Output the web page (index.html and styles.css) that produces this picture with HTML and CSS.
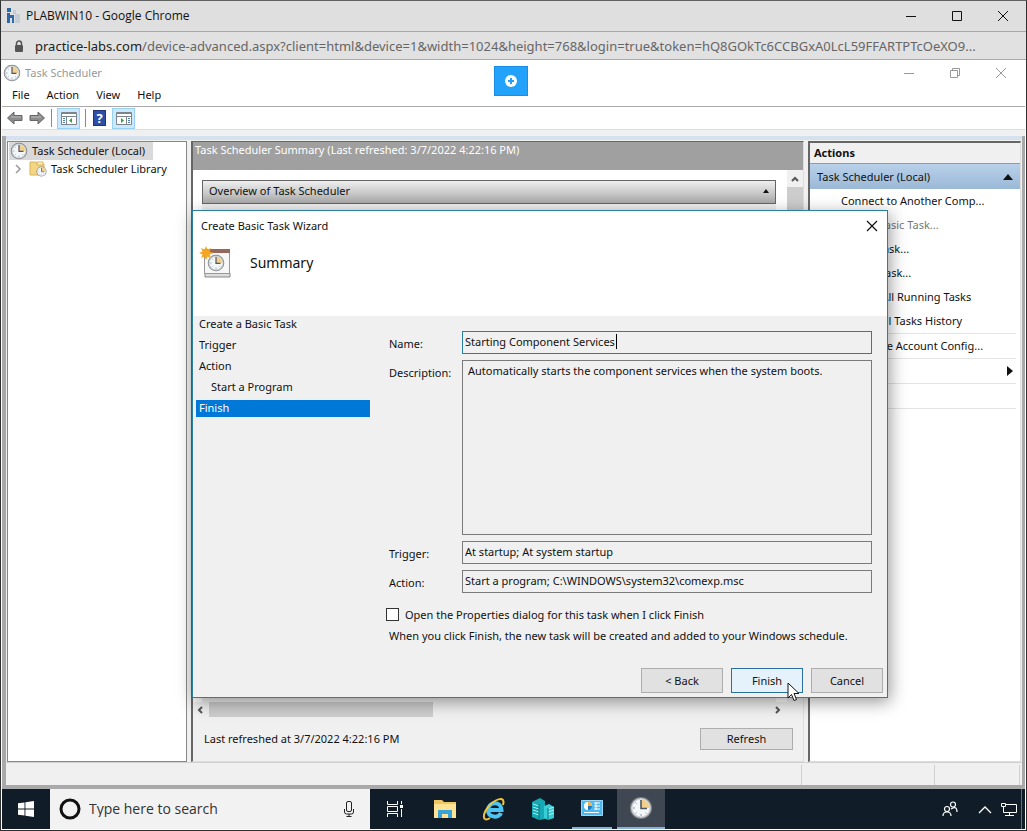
FILE: index.html
```html
<!DOCTYPE html>
<html lang="en">
<head>
    <meta charset="UTF-8">
    <meta name="viewport" content="width=device-width, initial-scale=1.0">
    <title>PLABWIN10 - Google Chrome</title>
    <link rel="stylesheet" href="styles.css">
</head>
<body>
    <!-- shared clock face -->
    <svg class="defs" width="0" height="0">
        <symbol id="clock" viewBox="0 0 24 24">
            <circle cx="12" cy="12" r="11" fill="#7d8186"/>
            <circle cx="12" cy="12" r="10" fill="#c9ced3"/>
            <circle cx="12" cy="12" r="8.500" fill="#f4f7fa"/>
            <path d="M12 12V3.500A8.500 8.500 0 0 1 20.500 12z" fill="#f3cf8d"/>
            <path d="M12 4v8.500h6" fill="none" stroke="#4d5862" stroke-width="1.600"/>
            <path d="M12 18v2M4 12h2M6.500 6.500l1 1M6.500 17.500l1-1M17.500 17.500l-1-1" stroke="#8b98a4"/>
        </symbol>
    </svg>

    <div class="browser">
        <header class="browser-title">
            <svg class="app-logo" width="16" height="18" viewBox="0 0 16 18"><path d="M1 1h4v4H1zM1 6h3v2h4v8H6v-5H4v5H1z" fill="#2a68a8"/><path d="M7 3h3v4h4v9H9V7H7z" fill="#c3ccd5"/></svg>
            <h1>PLABWIN10 - Google Chrome</h1>
            <div class="window-buttons">
                <button aria-label="Minimize"><svg width="12" height="12"><path d="M1 6.500h10" stroke="#111"/></svg></button>
                <button aria-label="Maximize"><svg width="12" height="12"><path d="M1.500 1.500h9v9h-9z" fill="none" stroke="#111"/></svg></button>
                <button aria-label="Close"><svg width="12" height="12"><path d="M1 1l10 10M11 1L1 11" stroke="#111"/></svg></button>
            </div>
        </header>

        <div class="address-bar">
            <svg width="10" height="12" viewBox="0 0 10 12"><path d="M2.500 5V3.500a2.500 2.500 0 0 1 5 0V5" fill="none" stroke="#555" stroke-width="1.500"/><rect x="1" y="5" width="8" height="7" rx="1" fill="#555"/></svg>
            <p class="url"><b>practice-labs.com</b>/device-advanced.aspx?client=html&amp;device=1&amp;width=1024&amp;height=768&amp;login=true&amp;token=hQ8GOkTc6CCBGxA0LcL59FFARTPTcOeXO9...</p>
        </div>

        <main class="desktop">
            <button class="connect-btn" aria-label="Show toolbar"><svg width="14" height="14"><circle cx="7" cy="7" r="6" fill="#fff"/><path d="M7 4v6M4 7h6" stroke="#22a2fb" stroke-width="2"/></svg></button>

            <div class="app-title">
                <svg width="18" height="18"><use href="#clock"/></svg>
                <h2>Task Scheduler</h2>
                <div class="window-buttons">
                    <button aria-label="Minimize"><svg width="12" height="12"><path d="M1 6.500h10" stroke="#999"/></svg></button>
                    <button aria-label="Restore"><svg width="12" height="12"><path d="M1.500 3.500h7v7h-7zM3.500 3.500v-2h7v7h-2" fill="none" stroke="#999"/></svg></button>
                    <button aria-label="Close"><svg width="12" height="12"><path d="M1 1l10 10M11 1L1 11" stroke="#999"/></svg></button>
                </div>
            </div>

            <nav class="menu">
                <button>File</button>
                <button>Action</button>
                <button>View</button>
                <button>Help</button>
            </nav>

            <div class="toolbar">
                <button aria-label="Back"><svg width="18" height="16" viewBox="0 0 18 16"><path d="M1.500 8L8 2v3.500h8v5H8V14z" fill="#8c8c8c" stroke="#666"/><path d="M5 7h10" stroke="#bbb"/></svg></button>
                <button aria-label="Forward"><svg width="18" height="16" viewBox="0 0 18 16"><path d="M16.500 8L10 2v3.500H2v5h8V14z" fill="#8c8c8c" stroke="#666"/><path d="M3 7h10" stroke="#bbb"/></svg></button>
                <span class="divider"></span>
                <button class="toggled" aria-label="Show console tree"><svg width="18" height="16" viewBox="0 0 18 16"><path d="M1.500 2.500h15v12h-15z" fill="#fff" stroke="#7d858c"/><path d="M2 3.500h14M2 6.500h14M6.500 7v7" stroke="#7d858c"/><path d="M3 8.500h2M3 10.500h2M3 12.500h2" stroke="#4b7fa8"/><path d="M12 8v5L9 10.500z" fill="#35a13c"/></svg></button>
                <span class="divider"></span>
                <button aria-label="Help"><span class="help-icon">?</span></button>
                <button class="toggled" aria-label="Show action pane"><svg width="18" height="16" viewBox="0 0 18 16"><path d="M1.500 2.500h15v12h-15z" fill="#fff" stroke="#7d858c"/><path d="M2 3.500h14M2 6.500h14M11.500 7v7" stroke="#7d858c"/><path d="M13 8.500h2M13 10.500h2M13 12.500h2" stroke="#4b7fa8"/><path d="M6 8v5l3-2.500z" fill="#35a13c"/></svg></button>
            </div>

            <div class="console">
                <div class="panes">
                    <aside class="tree">
                        <div class="tree-root"><svg width="18" height="18"><use href="#clock"/></svg><span>Task Scheduler (Local)</span></div>
                        <div class="tree-child">
                            <svg width="8" height="10"><path d="M2 1l4 4-4 4" fill="none" stroke="#999" stroke-width="1.500"/></svg>
                            <svg width="18" height="16" viewBox="0 0 18 16"><path d="M1 1h6l1 2h7v11H1z" fill="#f4d583" stroke="#d9b258"/><path d="M8 1h6v3H8z" fill="#fff3c8" stroke="#d9b258"/><svg x="7" y="5" width="11" height="11"><use href="#clock"/></svg></svg>
                            <span>Task Scheduler Library</span>
                        </div>
                    </aside>

                    <section class="summary">
                        <h3>Task Scheduler Summary (Last refreshed: 3/7/2022 4:22:16 PM)</h3>
                        <div class="summary-view">
                            <div class="overview">
                                <button class="overview-head">Overview of Task Scheduler <svg width="6" height="4"><path d="M0 4l3-4 3 4z" fill="#111"/></svg></button>
                            </div>
                            <div class="vscroll"><svg width="8" height="6"><path d="M1 5l3-3 3 3" fill="none" stroke="#555" stroke-width="2"/></svg><span></span></div>
                        </div>
                        <div class="hscroll">
                            <svg width="6" height="8"><path d="M5 1L2 4l3 3" fill="none" stroke="#555" stroke-width="2"/></svg>
                            <span></span>
                            <svg width="6" height="8"><path d="M1 1l3 3-3 3" fill="none" stroke="#555" stroke-width="2"/></svg>
                        </div>
                        <div class="summary-footer">
                            <p>Last refreshed at 3/7/2022 4:22:16 PM</p>
                            <button class="btn">Refresh</button>
                        </div>
                    </section>

                    <aside class="actions">
                        <h3>Actions</h3>
                        <div class="actions-group">Task Scheduler (Local) <svg width="10" height="6"><path d="M0 6l5-6 5 6z" fill="#111"/></svg></div>
                        <ul>
                            <li>Connect to Another Comp...</li>
                            <li class="disabled">Create Basic Task...</li>
                            <li>Create Task...</li>
                            <li>Import Task...</li>
                            <li>Display All Running Tasks</li>
                            <li>Enable All Tasks History</li>
                            <li class="ruled">AT Service Account Config...</li>
                            <li class="ruled">View <svg width="6" height="10"><path d="M0 0l6 5-6 5z" fill="#111"/></svg></li>
                            <li class="ruled">Refresh</li>
                            <li class="ruled"></li>
                        </ul>
                    </aside>
                </div>
                <div class="status-bar"><span></span><span></span><span></span></div>
            </div>

            <form class="wizard">
                <div class="wizard-head">
                    <div class="wizard-title">
                        <h2>Create Basic Task Wizard</h2>
                        <button type="button" aria-label="Close"><svg width="12" height="12"><path d="M1 1l10 10M11 1L1 11" stroke="#111" stroke-width="1.200"/></svg></button>
                    </div>
                    <div class="wizard-step">
                        <svg width="34" height="34" viewBox="0 0 34 34">
                            <path d="M6 27h25v4H6z" fill="#ddd" stroke="#888"/>
                            <path d="M5.500 4.500h25v23h-25z" fill="#f7f7f7" stroke="#999"/>
                            <path d="M5 3h26v4H5z" fill="#94685a"/>
                            <svg x="8" y="8" width="18" height="18"><use href="#clock"/></svg>
                            <path d="M7 0l1.500 3.500L12 2l-1.500 3.500 4 1.500-4 1.500L12 12l-3.500-1.500L7 14l-1.500-3.500L2 12l1.500-3.500L0 7l3.500-1.500L2 2l3.500 1.500z" fill="#f5a623"/>
                        </svg>
                        <h3>Summary</h3>
                    </div>
                </div>

                <div class="wizard-body">
                    <ol class="steps">
                        <li>Create a Basic Task</li>
                        <li>Trigger</li>
                        <li>Action</li>
                        <li class="sub">Start a Program</li>
                        <li class="current">Finish</li>
                    </ol>
                    <div class="fields">
                        <label for="name">Name:</label>
                        <div class="name-box"><input id="name" class="focused" type="text" value="Starting Component Services"><span class="caret"></span></div>
                        <label for="description">Description:</label>
                        <textarea id="description" readonly>Automatically starts the component services when the system boots.</textarea>
                        <label for="trigger">Trigger:</label>
                        <input id="trigger" type="text" value="At startup; At system startup" readonly>
                        <label for="action">Action:</label>
                        <input id="action" type="text" value="Start a program; C:\WINDOWS\system32\comexp.msc" readonly>
                        <div class="open-props">
                            <input id="props" type="checkbox">
                            <label for="props">Open the Properties dialog for this task when I click Finish</label>
                        </div>
                        <p>When you click Finish, the new task will be created and added to your Windows schedule.</p>
                    </div>
                </div>

                <div class="wizard-buttons">
                    <button type="button" class="btn back">&lt; Back</button>
                    <button type="button" class="btn primary">Finish</button>
                    <button type="button" class="btn">Cancel</button>
                </div>
                <svg class="cursor" width="14" height="20" viewBox="0 0 14 20"><path d="M1 1v15l3.500-3.500L7 18.500l2.500-1L7 11.500h5z" fill="#fff" stroke="#111"/></svg>
            </form>
        </main>

        <footer class="taskbar">
            <button class="start" aria-label="Start"><svg width="16" height="16" viewBox="0 0 16 16"><path d="M0 2.300L6.500 1.400v6.200H0zM7.400 1.200L16 0v7.600H7.400zM0 8.400h6.500v6.200L0 13.700zM7.400 8.400H16V16l-8.600-1.200z" fill="#fff"/></svg></button>
            <div class="search">
                <svg width="22" height="22"><circle cx="11" cy="11" r="9" fill="none" stroke="#111" stroke-width="3"/></svg>
                <input type="text" aria-label="Search" placeholder="Type here to search">
                <svg width="12" height="18"><rect x="3.500" y="1.500" width="5" height="10" rx="1.500" fill="none" stroke="#222"/><path d="M1.500 9v3q0 2 2 2h5q2 0 2-2V9M6 14v3M3.500 16.500h5" fill="none" stroke="#222"/></svg>
            </div>
            <button class="task-view" aria-label="Task view"><svg width="18" height="18"><path d="M1.500 1v3.500h10V1M1.500 17v-3.500h10V17M1.500 6.500h10v5h-10zM15.500 1v3M15.500 9v8" fill="none" stroke="#fff"/><path d="M14 5h3v3h-3z" fill="#fff"/></svg></button>
            <button aria-label="File Explorer"><svg width="22" height="20"><path d="M0 1h8l2 2h12v16H0z" fill="#f0c75e"/><path d="M0 5h22v14H0z" fill="#fde393"/><path d="M4 19v-8h14v8h-4v-4H8v4z" fill="#37a3d8"/></svg></button>
            <button aria-label="Internet Explorer"><svg width="24" height="24" viewBox="0 0 24 24"><path d="M6 13h13.500c0-9-13-9-13.500 0 0 8 11 8.500 13 3" fill="none" stroke="#4cc5f2" stroke-width="4"/><path d="M21 8c3-10-8-6-14 1C0 17 0 26 8 21" fill="none" stroke="#f3c43a" stroke-width="2"/></svg></button>
            <button aria-label="Server Manager"><svg width="22" height="22"><path d="M0 4l8-4 5 3v18l-6 1-7-3z" fill="#16a9b5"/><path d="M12 8l5-2 5 3v11l-6 2-4-2z" fill="#38ced6"/><path d="M1 6l6 2M1 9l6 2M1 12l6 2M1 15l6 2M16 11l6-2M16 14l6-2M16 17l6-2" stroke="#a6f0f2"/><path d="M7 6v16M16 10v12" stroke="#08747e"/></svg></button>
            <button class="running" aria-label="Control Panel"><svg width="22" height="16"><path d="M.5.5h21v15H.5z" fill="#4db8ef" stroke="#9ad8fa"/><circle cx="7" cy="6" r="4" fill="#fff"/><path d="M7 6V2a4 4 0 0 1 4 4z" fill="#f3b13e"/><path d="M13 3h6M13 6h6M13 9h6M15 2v8M3 12.500h15" stroke="#fff"/><path d="M7 6h4a4 4 0 0 1-4 4z" fill="#1b78bd"/></svg></button>
            <button class="running active" aria-label="Task Scheduler"><svg width="24" height="24"><use href="#clock"/></svg></button>
            <div class="tray">
                <button class="people" aria-label="People"><svg width="16" height="16"><g fill="none" stroke="#fff" stroke-width="1.200"><circle cx="5" cy="8" r="2.500"/><path d="M1 15q0-4 4-4t4 4"/><circle cx="11" cy="3.500" r="2.500"/><path d="M9 8q6-4 6 3"/></g></svg></button>
                <button aria-label="Show hidden icons"><svg width="14" height="9"><path d="M1 8l6-6 6 6" fill="none" stroke="#fff" stroke-width="1.300"/></svg></button>
                <button aria-label="Network"><svg width="17" height="15"><path d="M5.500 2.500h11v8h-13v-4M9.500 11v2.500M5 13.500h9M1.500 1.500h4v3h-4zM3.500 5v5" fill="none" stroke="#fff"/></svg></button>
            </div>
        </footer>
    </div>
</body>
</html>
```

FILE: styles.css
```css
* {
    box-sizing: border-box;
}

body {
    margin: 0;
    font-family: "Noto Sans", "Open Sans", sans-serif;
    font-size: 11px;
    line-height: 16px;
    color: #111;
}

h1, h2, h3, p, ul, ol {
    margin: 0;
    padding: 0;
    font-size: 11px;
    font-weight: normal;
}

ul, ol {
    list-style: none;
}

button, input, textarea {
    font: inherit;
    color: inherit;
    margin: 0;
}

button {
    background: none;
    border: 0;
    padding: 0;
}

svg {
    display: block;
    flex-shrink: 0;
}

.defs {
    position: absolute;
}

.browser {
    display: flex;
    flex-direction: column;
    min-height: 100vh;
    border: 1px solid #303030;
    border-top-color: #606060;
    background-color: #fff;
}

.browser-title {
    display: flex;
    align-items: center;
    height: 31px;
    padding: 0 6px 0 5px;
    background-color: #dfdfdf;
    border-bottom: 1px solid #a8a8a8;
}

.browser-title h1 {
    margin-left: 4px;
    font-family: "Open Sans", sans-serif;
    font-size: 12px;
}

.window-buttons {
    display: flex;
    margin-left: auto;
}

.window-buttons button {
    display: flex;
    justify-content: center;
    width: 46px;
}

.browser-title .window-buttons {
    margin-right: -6px;
}

.address-bar {
    display: flex;
    align-items: center;
    height: 28px;
    padding: 0 13px;
    background-color: #e1e1e2;
    border-bottom: 1px solid #aaa;
}

.url {
    margin-left: 11px;
    font-size: 13px;
    color: #666;
    white-space: nowrap;
}

.url b {
    font-weight: normal;
    color: #222;
}

.desktop {
    position: relative;
    display: flex;
    flex-direction: column;
    flex: 1;
    padding: 0 1px;
}

.connect-btn {
    position: absolute;
    top: 6px;
    left: 50%;
    display: flex;
    align-items: center;
    justify-content: center;
    width: 34px;
    height: 30px;
    margin-left: -20px;
    background-color: #22a2fb;
    border: 1px solid #188fe2;
}

.app-title {
    display: flex;
    align-items: center;
    height: 25px;
    padding: 0 1px;
    color: #999;
}

.app-title h2 {
    margin-left: 4px;
}

.menu {
    display: flex;
    gap: 17px;
    height: 22px;
    padding: 0 0 1px 10px;
    border-bottom: 1px solid #aaa;
}

.toolbar {
    display: flex;
    align-items: center;
    gap: 4px;
    height: 23px;
    padding-left: 4px;
    border-bottom: 1px solid #ddd;
}

.toolbar button {
    display: flex;
    align-items: center;
    justify-content: center;
}

.toolbar .toggled {
    width: 23px;
    height: 21px;
    background-color: #cce8ff;
    border: 1px solid #99d1f0;
}

.divider {
    width: 1px;
    height: 18px;
    margin: 0 1px;
    background-color: #888;
}

.help-icon {
    width: 13px;
    margin: 0 2px;
    background-color: #2d4fa5;
    border: 1px solid #1d3578;
    color: #fff;
    font-size: 13px;
    font-weight: bold;
    line-height: 14px;
}

.console {
    display: flex;
    flex-direction: column;
    flex: 1;
    border: solid #a9a9a9;
    border-width: 0 3px 4px 4px;
    background-color: #f0f0f0;
    margin-top: 6px;
    box-shadow: 0 -6px 0 #f0f0f0;
}

.panes {
    display: flex;
    flex: 1;
    gap: 4px;
    padding: 5px 1px 0;
    background: linear-gradient(#d5e1ef 4px, #f0f0f0 4px);
}

.tree {
    width: 180px;
    background-color: #fff;
    border: 1px solid #888;
}

.tree-root, .tree-child {
    display: flex;
    align-items: center;
    height: 18px;
}

.tree-root {
    width: 144px;
    gap: 4px;
    padding-left: 1px;
    margin-left: 1px;
    background-color: #d9d9d9;
}

.tree-child {
    gap: 4px;
    padding-left: 6px;
}

.tree-child svg + svg {
    margin-left: 3px;
}

.summary {
    display: flex;
    flex-direction: column;
    flex: 1;
    min-width: 0;
    border: 1px solid #ddd;
    border-top-color: #666;
    border-left: 2px solid #666;
}

.summary h3 {
    height: 28px;
    padding-left: 2px;
    background-color: #a0a0a0;
    color: #fff;
}

.summary-view {
    display: flex;
    flex: 1;
    justify-content: space-between;
    padding-left: 9px;
    background: #fff;
}

.overview {
    flex: 1;
    margin: 10px 11px 0 0;
    background-color: #f0f0f0;
}

.overview-head {
    display: flex;
    align-items: center;
    justify-content: space-between;
    width: 100%;
    height: 24px;
    padding: 0 6px 2px;
    background: linear-gradient(#efefef, #a9a9a9);
    border: 1px solid #666;
}

.vscroll {
    width: 16px;
    background-color: #f0f0f0;
}

.vscroll svg {
    margin: 6px 4px 5px;
}

.vscroll span {
    display: block;
    height: 200px;
    background-color: #cdcdcd;
}

.hscroll {
    display: flex;
    align-items: center;
    padding: 0 22px 0 4px;
}

.hscroll span {
    width: 224px;
    height: 15px;
    margin: 0 auto 0 6px;
    background-color: #cdcdcd;
}

.summary-footer {
    display: flex;
    align-items: center;
    justify-content: space-between;
    height: 44px;
    padding: 0 10px 0 11px;
}

.btn {
    width: 72px;
    height: 25px;
    background-color: #e1e1e1;
    border: 1px solid #adadad;
}

.summary-footer .btn {
    width: 93px;
    height: 22px;
}

.actions {
    width: 213px;
    background-color: #fff;
    border: 2px solid #666;
    border-right: 1px solid #ddd;
    border-bottom: 1px solid #ddd;
}

.actions h3 {
    height: 21px;
    padding: 2px 4px;
    background-color: #f0f0f0;
    border-bottom: 1px solid #999;
    font-weight: bold;
}

.actions-group {
    display: flex;
    align-items: center;
    justify-content: space-between;
    height: 25px;
    padding: 0 7px;
    background: linear-gradient(#b9d1ea, #9ab8d6);
}

.actions li {
    display: flex;
    align-items: center;
    justify-content: space-between;
    height: 24px;
    margin-right: 4px;
    padding: 0 3px 0 31px;
    white-space: nowrap;
}

.actions .disabled {
    color: #777;
}

.actions .ruled {
    height: 25px;
    border-top: 1px solid #e4e4e4;
}

.status-bar {
    display: flex;
    justify-content: flex-end;
    height: 23px;
    border-top: 1px solid #d0d0d0;
}

.status-bar span {
    width: 133px;
    margin-top: 2px;
    border-left: 1px solid #d0d0d0;
}

.status-bar span:last-child {
    width: 3px;
}

.status-bar span:nth-child(2) {
    width: 85px;
}

.wizard {
    position: absolute;
    top: 150px;
    left: 191px;
    display: flex;
    flex-direction: column;
    width: 696px;
    height: 488px;
    background-color: #f0f0f0;
    border: 1px solid #2a7f9e;
    box-shadow: 2px 4px 16px rgba(0, 0, 0, 0.4);
}

.wizard-head {
    height: 105px;
    background-color: #fff;
}

.wizard-title {
    display: flex;
    align-items: center;
    justify-content: space-between;
    height: 29px;
    padding: 0 9px 0 8px;
}

.wizard-step {
    display: flex;
    align-items: center;
    gap: 17px;
    padding: 6px;
}

.wizard-step h3 {
    font-size: 14px;
}

.wizard-body {
    display: flex;
    flex: 1;
}

.steps {
    width: 174px;
    margin-left: 3px;
}

.steps li {
    height: 17px;
    margin-bottom: 4px;
    padding-left: 3px;
}

.steps .sub {
    padding-left: 15px;
}

.steps .current {
    background-color: #0078d7;
    color: #fff;
}

.fields {
    display: grid;
    grid-template-columns: 73px 1fr;
    grid-template-rows: 23px 175px 23px 23px 23px 16px;
    row-gap: 6px;
    flex: 1;
    margin-left: 19px;
    padding: 15px 15px 0 0;
}

.fields > label {
    padding-top: 5px;
}

.fields input[type="text"], .fields textarea {
    display: block;
    width: 100%;
    height: 100%;
    padding: 0 2px 2px;
    background-color: #f0f0f0;
    border: 1px solid #7a7a7a;
    border-radius: 0;
    outline: 0;
    resize: none;
}

.fields textarea {
    padding: 2px 5px;
}

.name-box input.focused[type="text"] {
    border-color: #2a7f9e;
}

.name-box {
    position: relative;
}

.caret {
    position: absolute;
    top: 3px;
    left: 154px;
    width: 1px;
    height: 15px;
    background-color: #000;
}

.open-props {
    display: flex;
    align-items: center;
    gap: 6px;
    grid-column: 1 / 3;
    margin-left: -3px;
    padding-top: 8px;
}

.open-props input {
    appearance: none;
    width: 13px;
    height: 13px;
    background-color: #fff;
    border: 1px solid #333;
}

.fields p {
    grid-column: 1 / 3;
    white-space: nowrap;
}

.wizard-buttons {
    display: flex;
    justify-content: flex-end;
    gap: 8px;
    padding: 0 4px 4px 0;
}

.wizard-buttons .back {
    width: 82px;
}

.wizard-buttons .primary {
    background-color: #e5f1fb;
    border-color: #2a6f9e;
}

.cursor {
    position: absolute;
    right: 86px;
    bottom: -5px;
}

.taskbar {
    display: flex;
    height: 41px;
    margin: 0 1px;
    background-color: #101c28;
    border-bottom: 1px solid #fff;
}

.taskbar button {
    display: flex;
    align-items: center;
    justify-content: center;
    width: 48px;
    margin-right: 1px;
}

.taskbar .start {
    margin-right: 0;
}

.taskbar .task-view {
    width: 50px;
}

.search {
    display: flex;
    align-items: center;
    width: 320px;
    padding: 0 15px 0 9px;
    background-color: #f2f2f2;
}

.search input {
    flex: 1;
    min-width: 0;
    padding: 0 8px;
    background: none;
    border: 0;
    font-family: "Open Sans", sans-serif;
    font-size: 14px;
}

.search input::placeholder {
    color: #333;
}

.taskbar .running {
    border-bottom: 2px solid #83b4da;
}

.taskbar .running:not(.active) {
    width: 40px;
    margin: 0 5px 0 4px;
}

.taskbar .active {
    background-color: #3f4852;
}

.tray {
    display: flex;
    gap: 8px;
    margin-left: auto;
    margin-right: 3px;
    padding-right: 4px;
    border-right: 1px solid #66717b;
}

.tray button {
    width: auto;
    margin: 0;
}

.tray .people {
    margin-right: 12px;
}
```
